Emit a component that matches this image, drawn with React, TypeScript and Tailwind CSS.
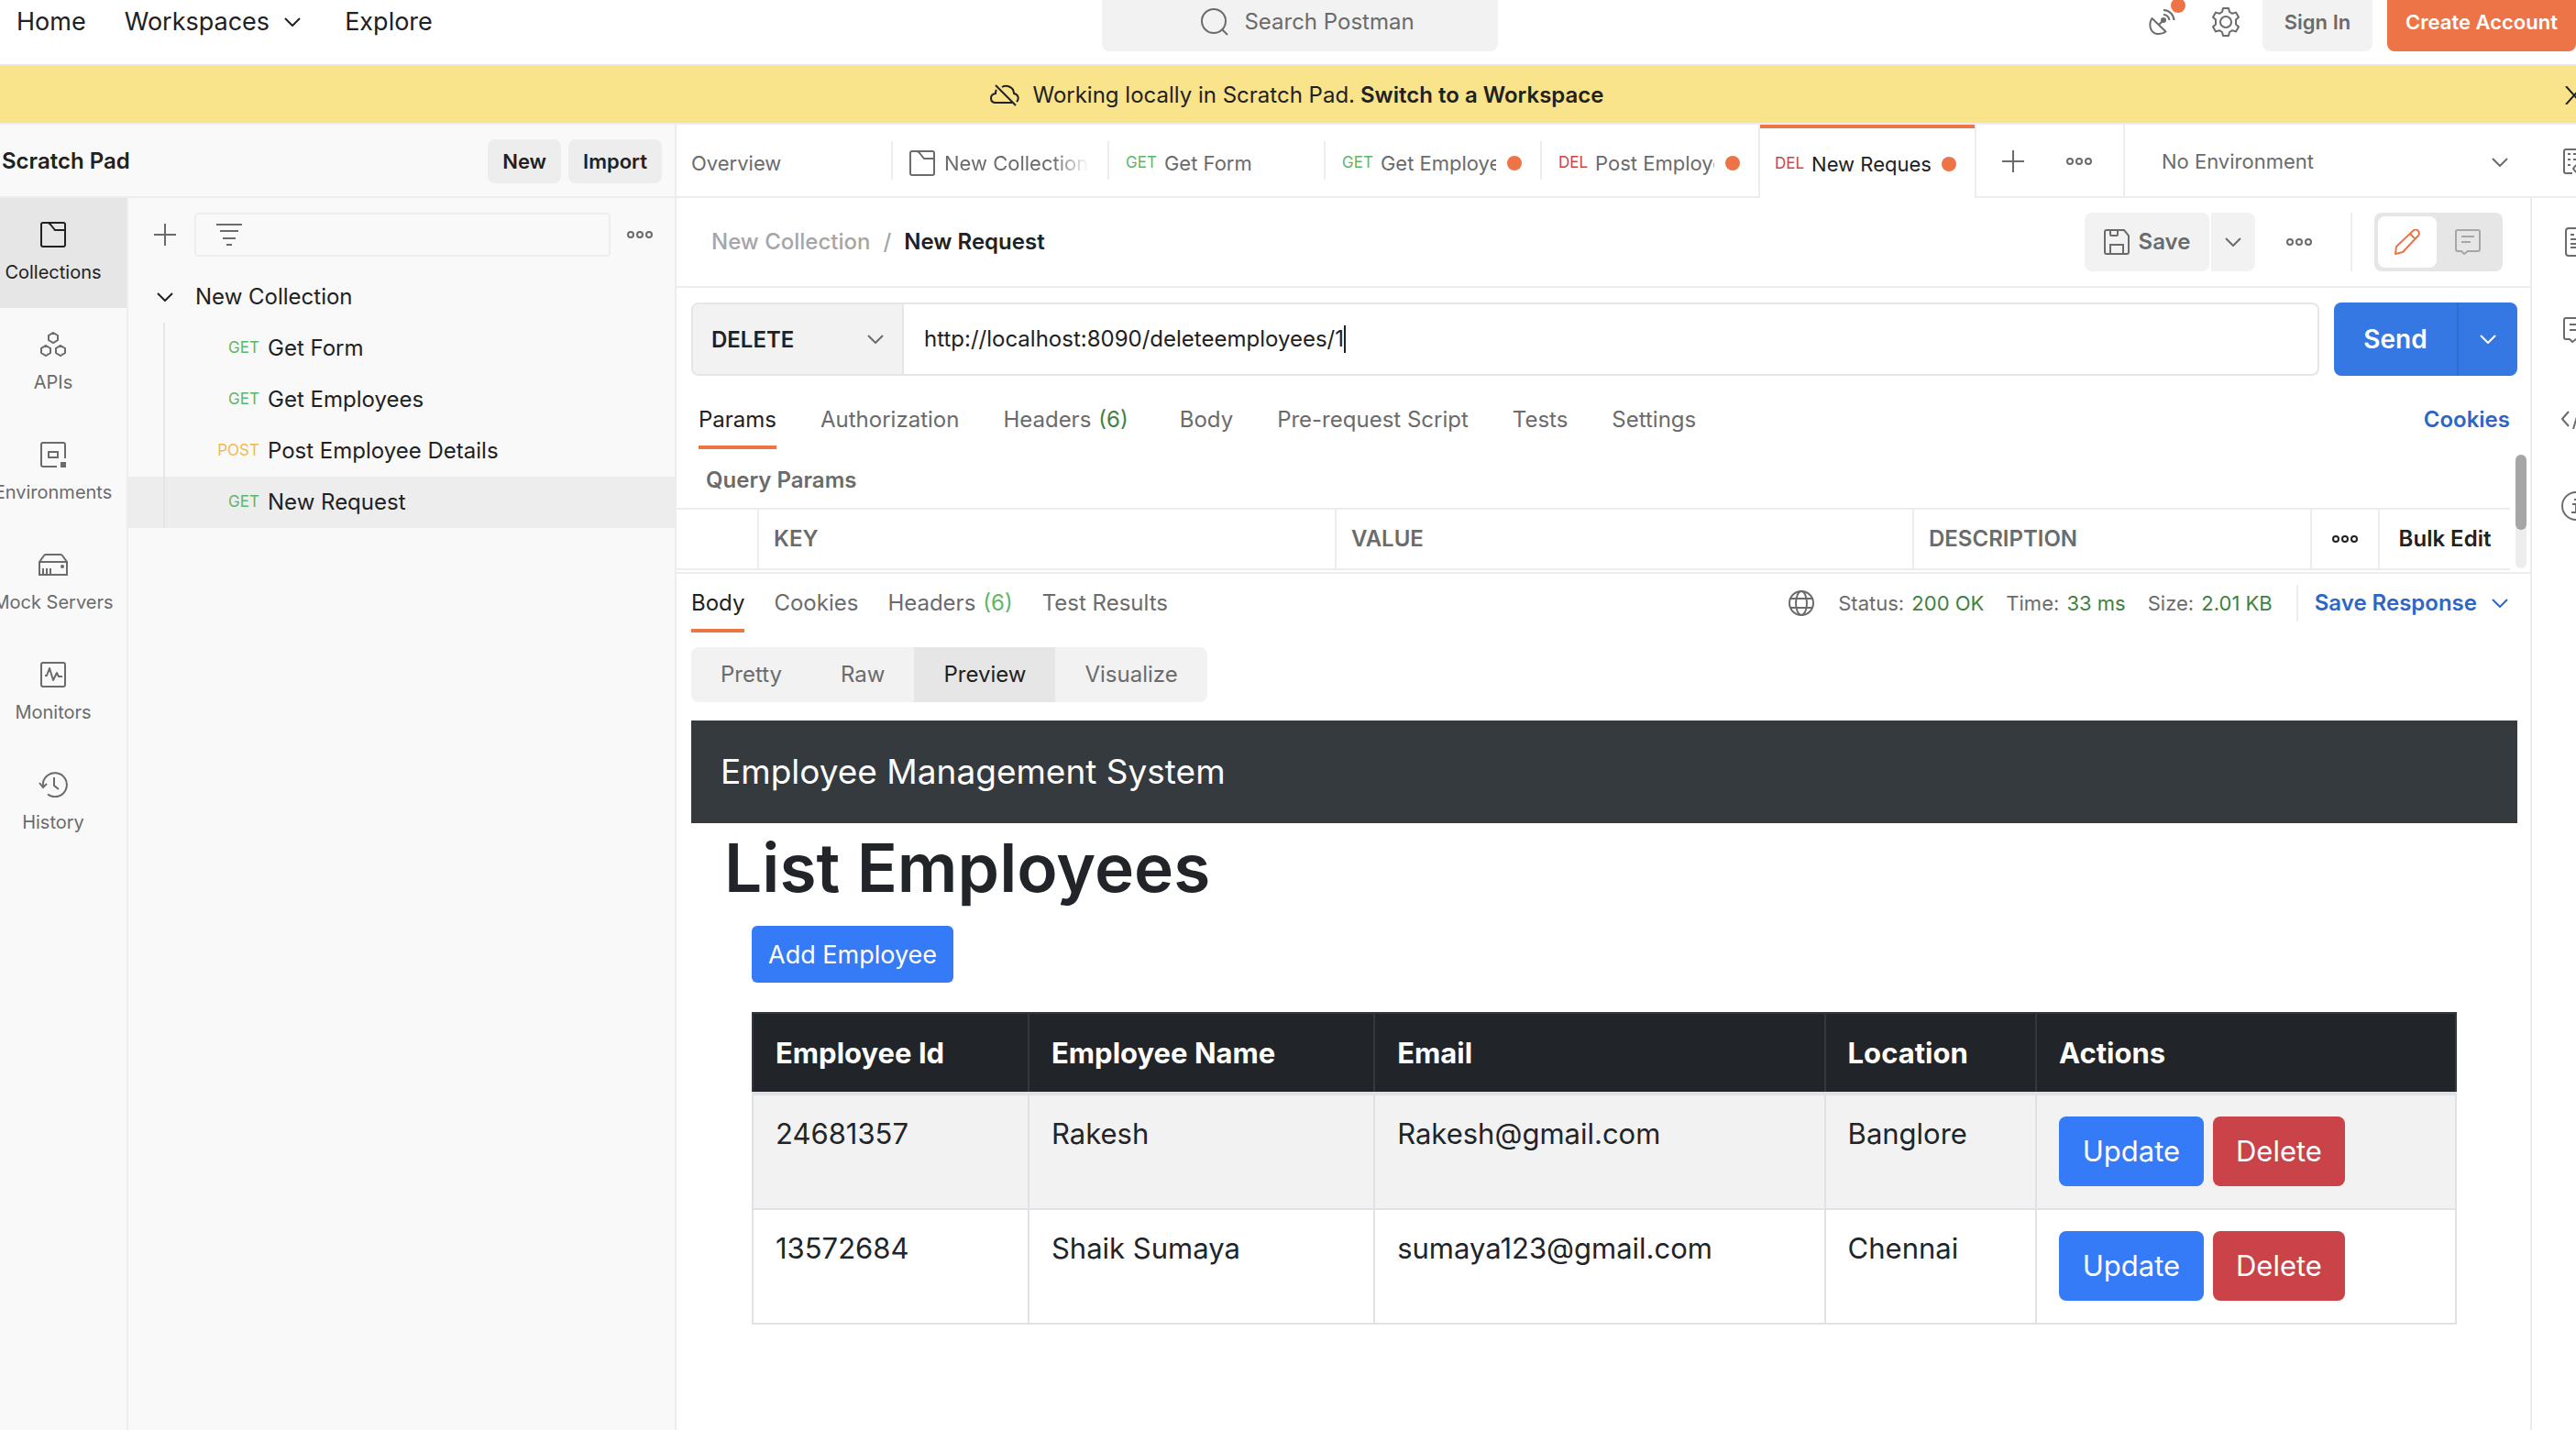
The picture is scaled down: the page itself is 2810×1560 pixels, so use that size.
import React from "react";

type IconProps = { className?: string };

const Chevron = ({ className = "" }: IconProps) => (
  <svg className={`h-[10px] w-[18px] shrink-0 ${className}`} viewBox="0 0 18 10" fill="none" stroke="currentColor" strokeWidth="2">
    <path d="M1 1l8 8 8-8" />
  </svg>
);

const Plus = () => (
  <svg className="size-6 shrink-0" viewBox="0 0 24 24" fill="none" stroke="currentColor" strokeWidth="2">
    <path d="M12 0v24M0 12h24" />
  </svg>
);

const Dots = () => (
  <svg className="h-2 w-7 shrink-0" viewBox="0 0 28 8" fill="none" stroke="currentColor" strokeWidth="2">
    <circle cx="4" cy="4" r="3" />
    <circle cx="14" cy="4" r="3" />
    <circle cx="24" cy="4" r="3" />
  </svg>
);

const CollectionIcon = () => (
  <svg className="size-7 shrink-0" viewBox="0 0 28 28" fill="none" stroke="currentColor" strokeWidth="2">
    <rect x="1" y="1" width="26" height="26" rx="2" />
    <path d="M8 1c2 0 3 1.500 4 3l4 5h11" />
  </svg>
);

const ApisIcon = () => (
  <svg className="size-7" viewBox="0 0 28 28" fill="none" stroke="currentColor" strokeWidth="2">
    <path d="M14 1l5 3v5l-5 3-5-3V4zM6 15l5 3v5l-5 3-5-3v-5zM22 15l5 3v5l-5 3-5-3v-5z" />
  </svg>
);

const EnvironmentsIcon = () => (
  <svg className="size-7" viewBox="0 0 28 28" fill="none" stroke="currentColor" strokeWidth="2">
    <path d="M18 27H3a2 2 0 0 1-2-2V3a2 2 0 0 1 2-2h22a2 2 0 0 1 2 2v15" />
    <path d="M9 11h10v6H9z" />
    <path d="M22 22h6v6h-6z" fill="currentColor" stroke="none" />
  </svg>
);

const MockIcon = () => (
  <svg className="h-7 w-8" viewBox="0 0 32 28" fill="none" stroke="currentColor" strokeWidth="2">
    <path d="M1 11l5-7a2 2 0 0 1 2-1h16a2 2 0 0 1 2 1l5 7v14H1zM1 11h30M5 18v7M9 18v7M13 18v7" />
    <circle cx="26" cy="16" r="2" fill="currentColor" stroke="none" />
  </svg>
);

const MonitorsIcon = () => (
  <svg className="size-7" viewBox="0 0 28 28" fill="none" stroke="currentColor" strokeWidth="2">
    <rect x="1" y="1" width="26" height="26" rx="2" />
    <path d="M5 15h2l3-8 4 13 4-8 2 4h4" strokeLinejoin="round" />
  </svg>
);

const HistoryIcon = () => (
  <svg className="h-7 w-8" viewBox="0 0 32 28" fill="none" stroke="currentColor" strokeWidth="2">
    <path d="M5 16a13 13 0 1 1 5 8.500" />
    <path d="M1 12l4 5 4-4M17 6v9l5 4" />
  </svg>
);

const SearchIcon = () => (
  <svg className="size-8 shrink-0" viewBox="0 0 32 32" fill="none" stroke="currentColor" strokeWidth="2">
    <circle cx="15" cy="15" r="13" />
    <path d="M24 24l6 6" />
  </svg>
);

const SatelliteIcon = () => (
  <svg className="size-7 overflow-visible" viewBox="0 0 28 28" fill="none" stroke="currentColor" strokeWidth="2" strokeLinejoin="round">
    <path d="M3.500 10C-1 17 2 26 9 27c4 .5 7-.5 9.500-2.500zM11 17l4-4" />
    <circle cx="16" cy="12" r="3" fill="currentColor" stroke="none" />
    <path d="M16 6a6.500 6.500 0 0 1 6.500 6M16 1a11.500 11.500 0 0 1 11.500 11" />
  </svg>
);

const GearIcon = () => (
  <svg className="size-8" viewBox="0 0 32 32" fill="none" stroke="currentColor" strokeWidth="2" strokeLinejoin="round">
    <path d="M13 1h6l1 4 3 1.800 4-1.200 3 5.200-3 2.800v4.800l3 2.800-3 5.200-4-1.200-3 1.800-1 4h-6l-1-4-3-1.800-4 1.200-3-5.200 3-2.800v-4.800L2 10.800l3-5.200 4 1.200L12 5z" />
    <circle cx="16" cy="16" r="6" />
  </svg>
);

const CloudOffIcon = () => (
  <svg className="h-6 w-8 shrink-0" viewBox="0 0 32 24" fill="none" stroke="currentColor" strokeWidth="2">
    <path d="M7 6c-1 1-1 3-1 4-3 .5-5 2.500-5 5 0 3 2 5 5 5h18M13 3c5-3 13 0 13 7 5 1 6 6 3 9M6 1l22 22" />
  </svg>
);

const CloseIcon = () => (
  <svg className="size-5" viewBox="0 0 20 20" fill="none" stroke="currentColor" strokeWidth="2">
    <path d="M1 0l18 20M19 0L1 20" />
  </svg>
);

const FilterIcon = () => (
  <svg className="h-6 w-7" viewBox="0 0 28 24" fill="none" stroke="currentColor" strokeWidth="2">
    <path d="M0 1h28M4 8h20M7 16h14M11 23h6" />
  </svg>
);

const SaveIcon = () => (
  <svg className="size-7 shrink-0" viewBox="0 0 28 28" fill="none" stroke="currentColor" strokeWidth="2">
    <path d="M3 1h19l5 6v18a2 2 0 0 1-2 2H3a2 2 0 0 1-2-2V3a2 2 0 0 1 2-2zM7 1v5a1 1 0 0 0 1 1h6a1 1 0 0 0 1-1V1M7 27V17h14v10" />
  </svg>
);

const PencilIcon = () => (
  <svg className="size-7" viewBox="0 0 28 28" fill="none" stroke="currentColor" strokeWidth="2" strokeLinejoin="round">
    <path d="M1 27l1-8L20 2a3.500 3.500 0 0 1 6 5L9 25zM17 5l6 6" />
  </svg>
);

const CommentIcon = () => (
  <svg className="size-7" viewBox="0 0 28 28" fill="none" stroke="currentColor" strokeWidth="2">
    <path d="M3 1h22a2 2 0 0 1 2 2v19a2 2 0 0 1-2 2H14l-4 3-3-3H3a2 2 0 0 1-2-2V3a2 2 0 0 1 2-2zM7 8h14M7 14h10" />
  </svg>
);

const EnvDocIcon = () => (
  <svg className="size-7 shrink-0" viewBox="0 0 28 28" fill="none" stroke="currentColor" strokeWidth="2">
    <path d="M10 27H3a2 2 0 0 1-2-2V3a2 2 0 0 1 2-2h20v9M5 6h3M11 6h8M5 12h3M11 12h8M5 18h3" />
    <path d="M11 22c4-7 12-7 16 0-4 7-12 7-16 0z" />
  </svg>
);

const DocIcon = () => (
  <svg className="h-8 w-6 shrink-0" viewBox="0 0 24 32" fill="none" stroke="currentColor" strokeWidth="2">
    <rect x="1" y="1" width="22" height="30" rx="3" />
    <path d="M6 8h4M6 13h12M6 18h12M6 22h12" />
  </svg>
);

const CodeIcon = () => (
  <svg className="h-5 w-8 shrink-0" viewBox="0 0 32 20" fill="none" stroke="currentColor" strokeWidth="2">
    <path d="M8 1l-7 8 7 8M24 1l7 8-7 8M19 0l-6 20" />
  </svg>
);

const InfoIcon = () => (
  <svg className="size-8 shrink-0" viewBox="0 0 32 32" fill="none" stroke="currentColor" strokeWidth="2">
    <circle cx="16" cy="16" r="15" />
    <path d="M12 14h4v9M11 23h10M14 9h3" />
  </svg>
);

const GlobeIcon = () => (
  <svg className="size-7 shrink-0" viewBox="0 0 28 28" fill="none" stroke="currentColor" strokeWidth="2">
    <circle cx="14" cy="14" r="13" />
    <ellipse cx="14" cy="14" rx="6" ry="13" />
    <path d="M2 9h24M2 19h24" />
  </svg>
);

const railItems = [
  { label: "Collections", icon: <CollectionIcon />, active: true },
  { label: "APIs", icon: <ApisIcon /> },
  { label: "Environments", icon: <EnvironmentsIcon /> },
  { label: "Mock Servers", icon: <MockIcon /> },
  { label: "Monitors", icon: <MonitorsIcon /> },
  { label: "History", icon: <HistoryIcon /> },
];

const requests = [
  { method: "GET", name: "Get Form" },
  { method: "GET", name: "Get Employees" },
  { method: "POST", name: "Post Employee Details" },
  { method: "GET", name: "New Request", selected: true },
];

const tabs = [
  { name: "Overview" },
  { name: "New Collection", icon: true },
  { name: "Get Form", method: "GET" },
  { name: "Get Employees", method: "GET", dirty: true },
  { name: "Post Employee", method: "DEL", dirty: true },
  { name: "New Request", method: "DEL", dirty: true, active: true },
];

const methodColor: Record<string, string> = {
  GET: "text-[#5cb767]",
  POST: "text-[#f3b94e]",
  DEL: "text-[#c9473c]",
};

const employees = [
  { id: "24681357", name: "Rakesh", email: "Rakesh@gmail.com", location: "Banglore" },
  { id: "13572684", name: "Shaik Sumaya", email: "sumaya123@gmail.com", location: "Chennai" },
];

function Header() {
  return (
    <header className="h-[72px] overflow-hidden border-b-2 border-[#e6e6e6] bg-white">
      <div className="-mt-2 grid h-16 grid-cols-[1202fr_432px_1176fr] items-center">
        <nav className="flex items-center pl-[18px] text-[27px] text-[#212121]">
          <a href="#home">Home</a>
          <button className="ml-[42px] flex items-center gap-4">
            Workspaces <Chevron />
          </button>
          <a href="#explore" className="ml-12">Explore</a>
        </nav>
        <button className="flex h-16 items-center justify-center gap-4 rounded-lg bg-[#f2f2f2] pl-4 text-[24px] text-[#6b6b6b]">
          <SearchIcon /> Search Postman
        </button>
        <div className="flex h-16 items-center justify-end whitespace-nowrap text-[22px] font-semibold">
          <button aria-label="Updates" className="relative mr-10 text-[#6b6b6b]">
            <SatelliteIcon />
            <span className="absolute -top-3 -right-3 h-4 w-4 rounded-full bg-[#ed7447]" />
          </button>
          <button aria-label="Settings" className="mr-6 text-[#6b6b6b]">
            <GearIcon />
          </button>
          <button className="mr-4 h-16 w-[120px] rounded-lg bg-[#f2f2f2] text-[#6b6b6b]">Sign In</button>
          <button className="h-16 w-[206px] rounded-lg bg-[#ed7447] text-white">Create Account</button>
        </div>
      </div>
    </header>
  );
}

function Banner() {
  return (
    <div className="flex h-16 items-center overflow-hidden border-b-2 border-[#ededed] bg-[#fae48b] pt-[2px] text-[24px] text-[#212121]">
      <p className="flex flex-1 items-center justify-center pl-8">
        <CloudOffIcon />
        <span className="mr-[6px] ml-[14px]">Working locally in Scratch Pad.</span>
        <a href="#workspace" className="font-semibold">Switch to a Workspace</a>
      </p>
      <button aria-label="Dismiss" className="-mr-2">
        <CloseIcon />
      </button>
    </div>
  );
}

function Sidebar() {
  return (
    <aside className="flex w-[738px] shrink-0 flex-col border-r-2 border-[#ededed] bg-[#f9f9f9] text-[#212121]">
      <div className="flex h-20 items-center gap-2 border-b-2 border-[#ededed] pt-[2px] pr-[14px] pl-[2px] font-semibold">
        <h2 className="flex-1 text-[24px]">Scratch Pad</h2>
        <button className="h-12 rounded-lg bg-[#ededed] px-4 text-[22px]">New</button>
        <button className="h-12 rounded-lg bg-[#ededed] px-4 text-[22px]">Import</button>
      </div>
      <div className="flex flex-1">
        <nav className="flex w-[140px] shrink-0 flex-col overflow-hidden border-r-2 border-[#ededed] text-[20px] text-[#6b6b6b]">
          {railItems.map((item) => (
            <button
              key={item.label}
              className={`flex h-[120px] flex-col items-center pt-[26px] pr-[22px] leading-6 whitespace-nowrap ${item.active ? "bg-[#e6e6e6] text-[#212121]" : ""}`}
            >
              {item.icon}
              <span className="mt-[15px]">{item.label}</span>
            </button>
          ))}
        </nav>
        <div className="flex-1">
          <div className="flex h-20 items-center pr-6 pl-7 text-[#6b6b6b]">
            <button aria-label="Create collection"><Plus /></button>
            <label className="mr-[18px] ml-5 flex h-12 flex-1 items-center rounded border-2 border-[#ededed] pl-[22px]">
              <FilterIcon />
              <input aria-label="Filter collections" className="ml-3 min-w-0 flex-1 bg-transparent outline-none" />
            </label>
            <button aria-label="More"><Dots /></button>
          </div>
          <button className="flex h-14 items-center gap-6 pl-[31px] text-[24px]">
            <Chevron /> New Collection
          </button>
          <ul className="text-[24px]">
            {requests.map((r) => (
              <li key={r.name} className={`flex h-14 pl-[38px] ${r.selected ? "bg-[#ededed]" : ""}`}>
                <button className="flex items-center border-l-2 border-[#e6e6e6]">
                  <span className={`w-[103px] text-right text-[17px] ${methodColor[r.method]}`}>{r.method}</span>
                  <span className="ml-[9px]">{r.name}</span>
                </button>
              </li>
            ))}
          </ul>
        </div>
      </div>
    </aside>
  );
}

function TabStrip() {
  return (
    <div className="flex h-20 text-[#6b6b6b]">
      <nav className="flex min-w-0 flex-1 text-[22px]">
        {tabs.map((t, i) => (
          <button
            key={t.name}
            className={`flex shrink-0 items-center ${
              t.active
                ? "w-[238px] border-x-2 border-[#ededed] text-[#212121]"
                : "w-[236px] border-b-2 border-[#ededed]"
            }`}
          >
            <span
              className={`flex w-full items-center pt-[6px] pr-5 ${i === 0 || t.active ? "pl-4" : "pl-[18px]"} ${
                t.active
                  ? "h-20 border-t-4 border-[#ed7447] pb-1"
                  : i < tabs.length - 2
                    ? "h-[42px] border-r-2 border-[#ededed]"
                    : "h-[42px]"
              }`}
            >
              {t.icon && <span className="mr-[10px]"><CollectionIcon /></span>}
              {t.method && <span className={`mr-2 text-[17px] ${methodColor[t.method]}`}>{t.method}</span>}
              <span
                className={`min-w-0 flex-1 overflow-hidden text-left whitespace-nowrap ${
                  t.icon ? "[mask-image:linear-gradient(to_right,black_75%,transparent)]" : ""
                }`}
              >
                {t.name}
              </span>
              {t.dirty && <span className="ml-3 size-4 shrink-0 rounded-full bg-[#ed7447]" />}
            </span>
          </button>
        ))}
        <div className="flex flex-1 items-center border-b-2 border-[#ededed] pt-[2px] pl-7">
          <button aria-label="New tab"><Plus /></button>
          <button aria-label="Tab options" className="ml-[46px]"><Dots /></button>
        </div>
      </nav>
      <div className="flex w-[494px] shrink-0 items-center overflow-hidden border-b-2 border-l-2 border-[#ededed] pt-[2px]">
        <div className="relative ml-10 w-[378px] shrink-0">
          <select aria-label="Environment" className="w-full appearance-none bg-transparent text-[22px]">
            <option>No Environment</option>
          </select>
          <Chevron className="pointer-events-none absolute top-3 right-0" />
        </div>
        <button aria-label="Environment quick look" className="ml-[60px] shrink-0"><EnvDocIcon /></button>
      </div>
    </div>
  );
}

function RequestHeader() {
  return (
    <div className="flex h-[98px] items-center border-b-2 border-[#ededed] pr-[30px] pl-[38px] text-[#6b6b6b]">
      <p className="flex flex-1 text-[24px] font-medium text-[#a6a6a6]">
        New Collection <span className="mx-[14px]">/</span>
        <span className="font-semibold text-[#212121]">New Request</span>
      </p>
      <button className="flex h-16 w-[136px] items-center justify-center gap-[10px] rounded-lg bg-[#f2f2f2] text-[24px] font-semibold">
        <SaveIcon /> Save
      </button>
      <button aria-label="Save options" className="ml-[2px] flex h-16 w-12 items-center justify-center rounded-r-lg bg-[#f2f2f2]">
        <Chevron />
      </button>
      <button aria-label="More actions" className="ml-[34px]"><Dots /></button>
      <div className="mr-6 ml-[42px] h-16 w-[2px] bg-[#ededed]" />
      <div className="flex h-16 items-center rounded-lg bg-[#e6e6e6] p-1">
        <button aria-label="Build" className="flex h-14 w-16 items-center justify-center rounded-lg bg-white text-[#ed7447]">
          <PencilIcon />
        </button>
        <button aria-label="Comments" className="flex h-14 w-[68px] items-center justify-center text-[#a6a6a6]">
          <CommentIcon />
        </button>
      </div>
    </div>
  );
}

function UrlBar() {
  return (
    <div className="flex h-24 items-end gap-4 pr-[14px] pl-4 text-[#212121]">
      <div className="flex h-20 flex-1 overflow-hidden rounded-lg border-2 border-[#e6e6e6]">
        <div className="relative w-[230px] shrink-0 border-r-2 border-[#e6e6e6] bg-[#f2f2f2]">
          <select aria-label="Method" className="h-full w-full appearance-none bg-transparent pt-[2px] pl-5 text-[24px] font-semibold">
            <option>DELETE</option>
          </select>
          <Chevron className="pointer-events-none absolute top-[33px] right-5 text-[#6b6b6b]" />
        </div>
        <div className="flex flex-1 items-center pl-[22px]">
          <input
            aria-label="Request URL"
            defaultValue="http://localhost:8090/deleteemployees/1"
            className="[field-sizing:content] text-[24px] outline-none"
          />
          <span className="h-[30px] w-[2px] bg-[#212121]" />
        </div>
      </div>
      <div className="flex h-20 w-[200px] overflow-hidden rounded-lg bg-[#3678e3] text-white">
        <button className="flex-1 text-[28px] font-semibold">Send</button>
        <button aria-label="Send options" className="flex w-[66px] items-center justify-center border-l-2 border-[#316dd0]">
          <Chevron />
        </button>
      </div>
    </div>
  );
}

function RequestTabs() {
  const names = ["Authorization", "Headers", "Body", "Pre-request Script", "Tests", "Settings"];
  return (
    <nav className="flex h-20 items-end pr-[22px] pl-6 text-[24px] leading-7 text-[#6b6b6b]">
      <button className="border-b-4 border-[#ed7447] pb-[14px] text-[#212121]">Params</button>
      {names.map((n) => (
        <button key={n} className={`ml-12 border-b-4 border-transparent pb-[14px] ${n === "Headers" ? "mr-2" : ""}`}>
          {n}
          {n === "Headers" && <span className="ml-2 text-[#3e8142]">(6)</span>}
        </button>
      ))}
      <a href="#cookies" className="ml-auto pb-[18px] font-semibold text-[#2f66c4]">Cookies</a>
    </nav>
  );
}

function ParamsPane() {
  const cell = "border-y-2 border-r-2 border-[#ededed] pl-4 text-left font-semibold";
  return (
    <div className="flex h-[136px] border-b-2 border-[#ededed] text-[24px]">
      <div className="min-w-0 flex-1 overflow-hidden">
        <h3 className="h-16 pt-5 pl-8 leading-7 font-semibold text-[#6b6b6b]">Query Params</h3>
        <table className="w-full table-fixed border-separate border-spacing-0 text-[#6b6b6b]">
          <thead>
            <tr className="h-[68px]">
              <th className={`${cell} w-[90px]`} aria-label="Enabled" />
              <th className={`${cell} w-[31.500%]`}>KEY</th>
              <th className={`${cell} w-[31.500%]`}>VALUE</th>
              <th className={cell}>DESCRIPTION</th>
              <th className="w-[74px] border-y-2 border-r-2 border-[#ededed] text-[#212121]">
                <button aria-label="Columns" className="block px-[22px]"><Dots /></button>
              </th>
              <th className="w-[142px] border-y-2 border-[#ededed] font-semibold text-[#212121]">
                <button>Bulk Edit</button>
              </th>
            </tr>
          </thead>
        </table>
      </div>
      <div className="mt-[6px] mr-1 ml-[6px] h-[124px] w-3 rounded-full bg-[#ededed]">
        <div className="h-[82px] rounded-full bg-[#a6a6a6]" />
      </div>
    </div>
  );
}

function ResponseBar() {
  return (
    <div className="flex h-16 items-end pl-4 text-[24px] leading-7 text-[#6b6b6b]">
      <nav className="flex gap-8">
        <button className="border-b-4 border-[#ed7447] pb-[14px] text-[#212121]">Body</button>
        <button className="pb-[18px]">Cookies</button>
        <button className="pb-[18px]">
          Headers<span className="ml-2 text-[#5cb767]">(6)</span>
        </button>
        <button className="pb-[18px]">Test Results</button>
      </nav>
      <div className="mb-3 ml-auto flex h-10 items-center pr-6 whitespace-nowrap text-[22px]">
        <GlobeIcon />
        <span className="ml-[26px]">Status: <span className="ml-[2px] text-[#3e8142]">200 OK</span></span>
        <span className="ml-6">Time: <span className="ml-[2px] text-[#3e8142]">33 ms</span></span>
        <span className="ml-6">Size: <span className="ml-[2px] text-[#3e8142]">2.01 KB</span></span>
        <span className="mr-[18px] ml-[26px] h-10 w-[2px] bg-[#ededed]" />
        <button className="flex items-center gap-4 text-[24px] font-semibold text-[#2f66c4]">
          Save Response <Chevron />
        </button>
      </div>
    </div>
  );
}

function EmployeePage() {
  const head = "border-2 border-b-4 border-[#32383e] border-b-[#dee2e6] pl-6 font-bold";
  return (
    <section className="mr-[14px] ml-4 text-[#212529]">
      <div className="flex h-28 items-center bg-[#343a3e] pl-8 text-[37px] text-white">Employee Management System</div>
      <h1 className="pt-[2px] pl-9 text-[73px] leading-[94px] font-semibold">List Employees</h1>
      <div className="px-[66px] pt-4">
        <button className="h-[62px] rounded-md bg-[#357af6] px-[18px] pt-[2px] text-[27px] text-white">Add Employee</button>
        <table className="mt-8 w-full table-fixed border-collapse text-[31px] leading-[38px]">
          <thead className="bg-[#212529] text-left text-white">
            <tr className="h-[88px]">
              <th className={`${head} w-[16.200%]`}>Employee Id</th>
              <th className={`${head} w-[20.300%]`}>Employee Name</th>
              <th className={`${head} w-[26.450%]`}>Email</th>
              <th className={`${head} w-[12.400%]`}>Location</th>
              <th className={head}>Actions</th>
            </tr>
          </thead>
          <tbody>
            {employees.map((e) => (
              <tr key={e.id} className="align-top odd:bg-[#f2f2f2]">
                {[e.id, e.name, e.email, e.location].map((v) => (
                  <td key={v} className="border-2 border-[#dee2e6] pt-[23px] pb-6 pl-6">{v}</td>
                ))}
                <td className="border-2 border-[#dee2e6] pt-[23px] pb-6 pl-6">
                  <div className="flex gap-[10px] text-white">
                    <button className="h-[76px] w-[158px] rounded-lg bg-[#357af6]">Update</button>
                    <button className="h-[76px] w-[144px] rounded-lg bg-[#c94349]">Delete</button>
                  </div>
                </td>
              </tr>
            ))}
          </tbody>
        </table>
      </div>
    </section>
  );
}

export default function App() {
  return (
    <div className="flex min-h-screen flex-col overflow-hidden bg-white font-['Inter',sans-serif]">
      <Header />
      <Banner />
      <div className="flex flex-1">
        <Sidebar />
        <div className="flex min-w-0 flex-1 flex-col">
          <TabStrip />
          <div className="flex flex-1">
            <main className="min-w-0 flex-1">
              <RequestHeader />
              <UrlBar />
              <RequestTabs />
              <ParamsPane />
              <ResponseBar />
              <div className="mt-4 mb-5 ml-4 inline-flex h-[60px] overflow-hidden rounded-lg bg-[#f2f2f2] text-[24px] text-[#6b6b6b]">
                <button className="px-8">Pretty</button>
                <button className="px-8">Raw</button>
                <button className="bg-[#e6e6e6] px-8 text-[#212121]">Preview</button>
                <button className="px-8">Visualize</button>
              </div>
              <EmployeePage />
            </main>
            <aside className="w-[50px] shrink-0 overflow-hidden border-l-2 border-[#ededed] text-[#6b6b6b]">
              <div className="flex w-24 flex-col items-center pt-8">
                <button aria-label="Documentation"><DocIcon /></button>
                <button aria-label="Comments" className="mt-[66px]"><CommentIcon /></button>
                <button aria-label="Code" className="mt-[74px]"><CodeIcon /></button>
                <button aria-label="Info" className="mt-[68px]"><InfoIcon /></button>
              </div>
            </aside>
          </div>
        </div>
      </div>
    </div>
  );
}
